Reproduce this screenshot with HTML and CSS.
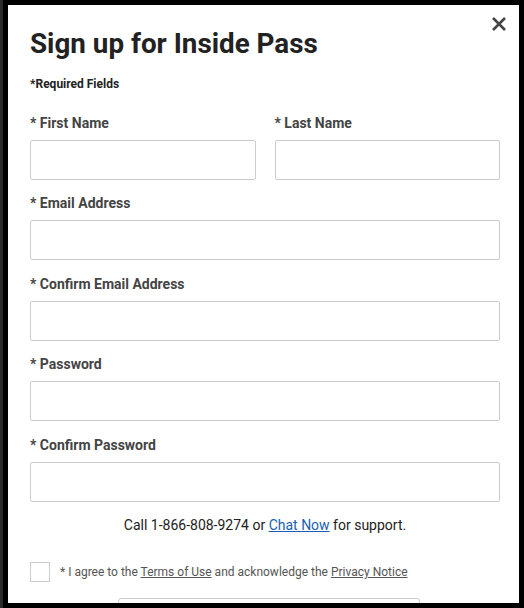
FILE: index.html
```html
<!DOCTYPE html>
<html lang="en">
<head>
<meta charset="utf-8">
<title>Sign up for Inside Pass</title>
<link rel="stylesheet" href="styles.css">
</head>
<body>
<div class="backdrop">
  <div class="modal">
    <button class="close" aria-label="Close">
      <svg width="16" height="16" viewBox="0 0 16 16"><path d="M2 2 L14 14 M14 2 L2 14" stroke="#444" stroke-width="2.6" stroke-linecap="butt"/></svg>
    </button>
    <h1 class="title">Sign up for Inside Pass</h1>
    <p class="required">*Required Fields</p>
    <form class="form">
      <div class="row">
        <div class="field">
          <label class="label">* First Name</label>
          <input class="input" type="text">
        </div>
        <div class="field">
          <label class="label">* Last Name</label>
          <input class="input" type="text">
        </div>
      </div>
      <div class="field">
        <label class="label">* Email Address</label>
        <input class="input" type="email">
      </div>
      <div class="field">
        <label class="label">* Confirm Email Address</label>
        <input class="input" type="email">
      </div>
      <div class="field">
        <label class="label">* Password</label>
        <input class="input" type="password">
      </div>
      <div class="field">
        <label class="label">* Confirm Password</label>
        <input class="input" type="password">
      </div>
      <p class="support">Call 1-866-808-9274 or <a href="#" class="chat">Chat Now</a> for support.</p>
      <div class="agree">
        <span class="checkbox"></span>
        <span class="agree-text">* I agree to the <a href="#" class="ulink">Terms of Use</a> and acknowledge the <a href="#" class="ulink">Privacy Notice</a></span>
      </div>
      <div class="submit-wrap"><button class="submit" type="button" aria-label="Create Account"></button></div>
    </form>
  </div>
</div>
</body>
</html>
```
FILE: styles.css
```css
* { box-sizing: border-box; }
html, body { margin: 0; padding: 0; }
body {
  background: #2b2b2b;
  font-family: Roboto, "Liberation Sans", Arial, sans-serif;
  height: 608px;
  overflow: hidden;
}
.backdrop {
  padding-left: 3px;
  height: 608px;
}
.modal {
  position: relative;
  width: 521px;
  height: 608px;
  border: 5px solid #000;
  background: #fff;
  padding: 0 19px 0 22px;
  overflow: hidden;
}
.close {
  position: absolute;
  top: 8px;
  right: 9px;
  width: 22px;
  height: 22px;
  padding: 3px;
  border: 0;
  background: none;
  display: flex;
  align-items: center;
  justify-content: center;
}
.title {
  margin: 0;
  padding-top: 22px;
  font-size: 27.8px;
  line-height: 33px;
  font-weight: 700;
  color: #222;
}
.required {
  margin: 16px 0 0;
  font-size: 12px;
  line-height: 16px;
  font-weight: 700;
  color: #222;
}
.form {
  margin-top: 23px;
  display: flex;
  flex-direction: column;
}
.row {
  display: grid;
  grid-template-columns: 1fr 1fr;
  column-gap: 19px;
}
.field {
  display: flex;
  flex-direction: column;
  margin-bottom: 15.5px;
}
.row .field { margin-bottom: 15px; }
.label {
  font-size: 14px;
  line-height: 17px;
  font-weight: 700;
  color: #444;
  margin-bottom: 8px;
}
.input {
  height: 40px;
  border: 1px solid #ccc;
  border-radius: 2px;
  background: #fff;
  font: inherit;
  width: 100%;
}
.support {
  margin: 0;
  text-align: center;
  font-size: 14px;
  line-height: 17px;
  color: #222;
}
.chat { color: #1a5fb4; text-decoration: underline; }
.agree {
  margin-top: 28px;
  display: flex;
  align-items: center;
  gap: 10px;
}
.checkbox {
  width: 20px;
  height: 20px;
  border: 1px solid #ccc;
  flex: none;
}
.agree-text {
  font-size: 12px;
  line-height: 16px;
  color: #555;
}
.ulink { color: #555; text-decoration: underline; }
.submit-wrap {
  margin-top: 16px;
  display: flex;
  justify-content: center;
}
.submit {
  width: 302px;
  height: 44px;
  margin-left: 8px;
  border: 1px solid #ccc;
  border-radius: 3px;
  background: #fff;
}
```
